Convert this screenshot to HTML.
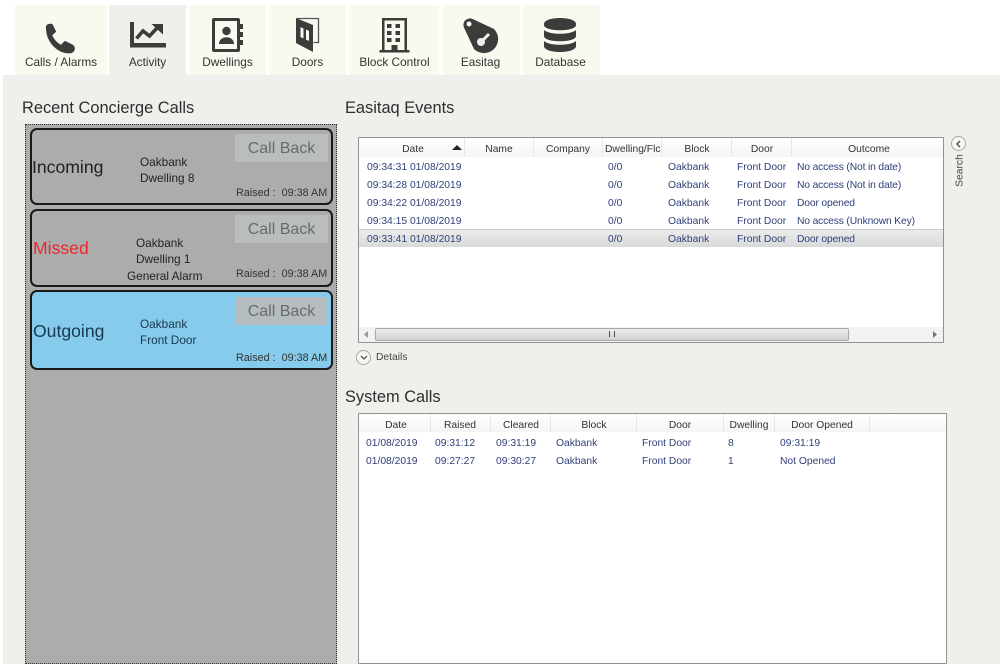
<!DOCTYPE html>
<html><head><meta charset="utf-8"><style>
html,body{margin:0;padding:0;width:1000px;height:667px;overflow:hidden;background:#fff;font-family:"Liberation Sans",sans-serif}
.a,.a *{box-sizing:border-box}
.p{position:absolute;white-space:nowrap}
.tab{position:absolute;top:5px;height:70px;background:#f9f9f0}
.tl{position:absolute;top:55px;font-size:11.800px;color:#333;transform:translateX(-50%);white-space:nowrap}
.h{position:absolute;font-size:16.400px;color:#2e2e2e;white-space:nowrap}
.card{position:absolute;left:30px;width:303px;background:#acacac;border:2px solid #1a1a1a;border-radius:7px}
.cb{position:absolute;background:#b9bdbd;color:#6a6a6a;font-size:16px;text-align:center;width:93px;height:28px;line-height:30px}
.big{position:absolute;font-size:17.600px;color:#222;white-space:nowrap}
.n{position:absolute;font-size:11.800px;color:#222;white-space:nowrap}
.rs{position:absolute;font-size:10.800px;color:#333;white-space:nowrap;left:236px}
.grid{position:absolute;background:#fff;border:1px solid #8f9291;border-radius:1px}
.th{position:absolute;font-size:10.300px;color:#333;transform:translateX(-50%);white-space:nowrap}
.sep{position:absolute;width:1px;background:#e6e8e8}
.c{position:absolute;font-size:10.300px;color:#2f3f78;white-space:nowrap}
.o{letter-spacing:-.15px}
.circ{position:absolute;width:15px;height:15px;border:1px solid #a8a8a8;border-radius:50%;background:#f6f6f4}
</style></head><body><div class="a">
<div class="p" style="left:3px;top:75px;width:997px;height:589px;background:#eef0ec"></div>

<div class="tab" style="left:15px;width:92px"></div>
<div class="tab" style="left:109px;width:77px;background:#eef0ec"></div>
<div class="tab" style="left:189px;width:77px"></div>
<div class="tab" style="left:269px;width:77px"></div>
<div class="tab" style="left:349px;width:90px"></div>
<div class="tab" style="left:442px;width:78px"></div>
<div class="tab" style="left:522px;width:78px"></div>

<svg class="p" style="left:0;top:0" width="620" height="60" viewBox="0 0 620 60" fill="#3c3c3a">
<path d="M46.500 28C46 25 49 24 52 24.500L55.500 31.500L51.500 35C53.500 40 57 43.500 61 45.500L65 41.500L73 45.500C75 48 74.500 51 71.500 52.500C58 54.500 47 42 46.500 28Z" stroke="#3c3c3a" stroke-width="1.200" stroke-linejoin="round"/>
<path d="M130 22h4v21h32v4.500h-36z"/>
<path d="M136.500 38.500l6.500-7.500 6.500 5 9-9.500" fill="none" stroke="#3c3c3a" stroke-width="3.600"/>
<path d="M151.500 24h11.500v10.500z"/>
<path fill-rule="evenodd" d="M214 18h24a2 2 0 0 1 2 2v30a2 2 0 0 1-2 2h-24a2 2 0 0 1-2-2v-30a2 2 0 0 1 2-2zM215 21v28h22v-28z"/>
<circle cx="226.500" cy="31" r="4.200"/><path d="M219 44c0-9 15-9 15 0z"/>
<rect x="240" y="24" width="3" height="5"/><rect x="240" y="32" width="3" height="5"/><rect x="240" y="40" width="3" height="5"/>
<path d="M297 18.500h21.500v24h-5" fill="none" stroke="#555" stroke-width="1.300"/>
<path fill-rule="evenodd" d="M296 18l17 7v27l-17-9zM300.500 27v10l3 1.500v-10zM306 29.500v10l3 1.500v-10z"/>
<path fill-rule="evenodd" d="M382 18h25v32h2.500v2.500h-30v-2.500h2.500zM384.500 20.500v29.500h7v-5h6v5h7v-29.500z"/>
<g><rect x="387" y="24" width="4.500" height="4"/><rect x="395.500" y="24" width="4.500" height="4"/>
<rect x="387" y="31" width="4.500" height="4"/><rect x="395.500" y="31" width="4.500" height="4"/>
<rect x="387" y="38" width="4.500" height="4"/><rect x="395.500" y="38" width="4.500" height="4"/></g>
<path d="M473.200 19.300L494 29A14 14 0 0 1 474 49L464.300 28.200A6.500 6.500 0 0 1 473.200 19.300Z"/>
<circle cx="469" cy="24" r="2.500" fill="#f9f9f0"/>
<path d="M489 34l-7 7" stroke="#f4f4ec" stroke-width="3" fill="none"/><circle cx="481" cy="42" r="4" fill="#eee"/>
<path d="M544 24c0-8 32-8 32 0v1c0 7-32 7-32 0z"/>
<path d="M544 30c5 5 27 5 32 0v6c0 7-32 7-32 0z"/>
<path d="M544 41c5 5 27 5 32 0v5c0 8-32 8-32 0z"/>
</svg>

<div class="tl" style="left:61px">Calls / Alarms</div>
<div class="tl" style="left:147.500px">Activity</div>
<div class="tl" style="left:227.500px">Dwellings</div>
<div class="tl" style="left:307.500px">Doors</div>
<div class="tl" style="left:394.500px">Block Control</div>
<div class="tl" style="left:480.500px">Easitag</div>
<div class="tl" style="left:560.500px">Database</div>

<div class="h" style="left:22px;top:99px">Recent Concierge Calls</div>
<div class="h" style="left:345px;top:99px">Easitaq Events</div>
<div class="h" style="left:345px;top:388px">System Calls</div>

<div class="p" style="left:25px;top:124px;width:312px;height:540px;background:#acacac;border:1px dotted #333"></div>

<div class="card" style="top:128px;height:77px"></div>
<div class="card" style="top:209px;height:78px"></div>
<div class="card" style="top:290px;height:80px;background:#86cbec"></div>

<div class="cb" style="left:235px;top:134px">Call Back</div>
<div class="cb" style="left:235px;top:215px">Call Back</div>
<div class="cb" style="left:236px;top:297px;width:91px;background:#b5bcbf">Call Back</div>

<div class="big" style="left:32px;top:157px">Incoming</div>
<div class="big" style="left:33px;top:238px;color:#f0242c">Missed</div>
<div class="big" style="left:33px;top:321px;color:#17384f">Outgoing</div>

<div class="n" style="left:140px;top:155px">Oakbank</div>
<div class="n" style="left:140px;top:171px">Dwelling 8</div>
<div class="n" style="left:136px;top:236px">Oakbank</div>
<div class="n" style="left:136px;top:252px">Dwelling 1</div>
<div class="n" style="left:127px;top:269px">General Alarm</div>
<div class="n" style="left:140px;top:317px;color:#17384f">Oakbank</div>
<div class="n" style="left:140px;top:333px;color:#17384f">Front Door</div>

<div class="rs" style="top:187px">Raised :&nbsp; 09:38 AM</div>
<div class="rs" style="top:268px">Raised :&nbsp; 09:38 AM</div>
<div class="rs" style="top:352px">Raised :&nbsp; 09:38 AM</div>

<!-- Easitag grid -->
<div class="grid" style="left:358px;top:137px;width:586px;height:206px"></div>
<div class="p" style="left:359px;top:138px;width:584px;height:19px;background:linear-gradient(#fff,#f4f5f5)"></div>
<div class="sep" style="left:464px;top:138px;height:19px"></div>
<div class="sep" style="left:533px;top:138px;height:19px"></div>
<div class="sep" style="left:602px;top:138px;height:19px"></div>
<div class="sep" style="left:661px;top:138px;height:19px"></div>
<div class="sep" style="left:731px;top:138px;height:19px"></div>
<div class="sep" style="left:791px;top:138px;height:19px"></div>
<div class="th" style="left:413px;top:144px">Date</div>
<svg class="p" style="left:452px;top:145px" width="10" height="5"><path d="M0 5L5 0L10 5z" fill="#222"/></svg>
<div class="th" style="left:499px;top:144px">Name</div>
<div class="th" style="left:568px;top:144px">Company</div>
<div class="p" style="left:605px;top:144px;width:56px;overflow:hidden;font-size:10.300px;color:#333">Dwelling/Flc</div>
<div class="th" style="left:697px;top:144px">Block</div>
<div class="th" style="left:762px;top:144px">Door</div>
<div class="th" style="left:869px;top:144px">Outcome</div>

<div class="p" style="left:359px;top:229px;width:584px;height:18px;background:linear-gradient(#ececec,#d8d9d9);border-top:1px solid #ccc"></div>

<div class="c" style="left:367px;top:162px">09:34:31 01/08/2019</div><div class="c" style="left:608px;top:162px">0/0</div><div class="c" style="left:668px;top:162px">Oakbank</div><div class="c" style="left:737px;top:162px">Front Door</div><div class="c o" style="left:797px;top:162px">No access (Not in date)</div>
<div class="c" style="left:367px;top:180px">09:34:28 01/08/2019</div><div class="c" style="left:608px;top:180px">0/0</div><div class="c" style="left:668px;top:180px">Oakbank</div><div class="c" style="left:737px;top:180px">Front Door</div><div class="c o" style="left:797px;top:180px">No access (Not in date)</div>
<div class="c" style="left:367px;top:198px">09:34:22 01/08/2019</div><div class="c" style="left:608px;top:198px">0/0</div><div class="c" style="left:668px;top:198px">Oakbank</div><div class="c" style="left:737px;top:198px">Front Door</div><div class="c o" style="left:797px;top:198px">Door opened</div>
<div class="c" style="left:367px;top:216px">09:34:15 01/08/2019</div><div class="c" style="left:608px;top:216px">0/0</div><div class="c" style="left:668px;top:216px">Oakbank</div><div class="c" style="left:737px;top:216px">Front Door</div><div class="c o" style="left:797px;top:216px">No access (Unknown Key)</div>
<div class="c" style="left:367px;top:234px">09:33:41 01/08/2019</div><div class="c" style="left:608px;top:234px">0/0</div><div class="c" style="left:668px;top:234px">Oakbank</div><div class="c" style="left:737px;top:234px">Front Door</div><div class="c o" style="left:797px;top:234px">Door opened</div>

<div class="p" style="left:359px;top:327px;width:584px;height:15px;background:#f1f2f2"></div>
<div class="p" style="left:375px;top:328px;width:474px;height:13px;border:1px solid #a8aaaa;border-radius:2px;background:linear-gradient(#eceded,#cfd1d1)"></div>
<svg class="p" style="left:364px;top:331px" width="6" height="7"><path d="M4 0L0 3.500L4 7z" fill="#999"/></svg>
<svg class="p" style="left:932px;top:331px" width="6" height="7"><path d="M1 0L5 3.500L1 7z" fill="#777"/></svg>
<div class="p" style="left:609px;top:331px;width:6px;height:6px;border-left:1px solid #555;border-right:1px solid #555"></div>

<div class="circ" style="left:356px;top:350px"></div>
<svg class="p" style="left:360px;top:355px" width="8" height="5"><path d="M1 1L4 4L7 1" fill="none" stroke="#555" stroke-width="1.300"/></svg>
<div class="p" style="left:376px;top:352px;font-size:10.300px;color:#444">Details</div>

<div class="circ" style="left:951px;top:136px"></div>
<svg class="p" style="left:956px;top:140px" width="5" height="8"><path d="M4 1L1 4L4 7" fill="none" stroke="#444" stroke-width="1.300"/></svg>
<div class="p" style="left:938px;top:165px;width:44px;text-align:center;font-size:10.300px;color:#444;transform:rotate(-90deg)">Search</div>

<!-- System calls grid -->
<div class="grid" style="left:358px;top:413px;width:589px;height:251px"></div>
<div class="p" style="left:359px;top:414px;width:587px;height:18px;background:linear-gradient(#fff,#f4f5f5)"></div>
<div class="sep" style="left:430px;top:414px;height:18px"></div>
<div class="sep" style="left:490px;top:414px;height:18px"></div>
<div class="sep" style="left:550px;top:414px;height:18px"></div>
<div class="sep" style="left:636px;top:414px;height:18px"></div>
<div class="sep" style="left:723px;top:414px;height:18px"></div>
<div class="sep" style="left:774px;top:414px;height:18px"></div>
<div class="sep" style="left:869px;top:414px;height:18px"></div>
<div class="th" style="left:396px;top:420px">Date</div>
<div class="th" style="left:460px;top:420px">Raised</div>
<div class="th" style="left:521px;top:420px">Cleared</div>
<div class="th" style="left:594px;top:420px">Block</div>
<div class="th" style="left:680px;top:420px">Door</div>
<div class="th" style="left:749px;top:420px">Dwelling</div>
<div class="th" style="left:822px;top:420px">Door Opened</div>

<div class="c" style="left:366px;top:438px">01/08/2019</div><div class="c" style="left:435px;top:438px">09:31:12</div><div class="c" style="left:496px;top:438px">09:31:19</div><div class="c" style="left:556px;top:438px">Oakbank</div><div class="c" style="left:642px;top:438px">Front Door</div><div class="c" style="left:728px;top:438px">8</div><div class="c" style="left:780px;top:438px">09:31:19</div>
<div class="c" style="left:366px;top:456px">01/08/2019</div><div class="c" style="left:435px;top:456px">09:27:27</div><div class="c" style="left:496px;top:456px">09:30:27</div><div class="c" style="left:556px;top:456px">Oakbank</div><div class="c" style="left:642px;top:456px">Front Door</div><div class="c" style="left:728px;top:456px">1</div><div class="c" style="left:780px;top:456px">Not Opened</div>
</div></body></html>
